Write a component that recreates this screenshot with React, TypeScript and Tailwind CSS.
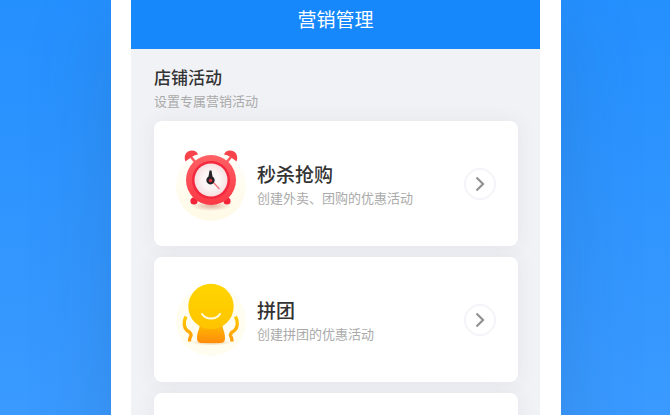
import type { ReactNode } from "react"

const ClockIcon = () => (
    <svg viewBox="0 4 97 100" className="size-full" aria-hidden="true">
        <defs>
            <linearGradient id="clock-halo" x1="0" y1="0" x2="0" y2="1">
                <stop offset="0" stopColor="#fffefa" />
                <stop offset="1" stopColor="#fffae6" />
            </linearGradient>
            <linearGradient id="clock-body" x1="0" y1="0" x2="0" y2="1">
                <stop offset="0" stopColor="#ff6065" />
                <stop offset="1" stopColor="#fb3a46" />
            </linearGradient>
            <radialGradient id="clock-face">
                <stop offset="0.5" stopColor="#fdf6f6" />
                <stop offset="1" stopColor="#f6dfe1" />
            </radialGradient>
            <radialGradient id="clock-shadow">
                <stop offset="0" stopColor="#dba391" stopOpacity="0.8" />
                <stop offset="1" stopColor="#dba391" stopOpacity="0" />
            </radialGradient>
        </defs>
        <circle cx="51" cy="56" r="35" fill="url(#clock-halo)" />
        <ellipse cx="51" cy="76" rx="20" ry="5" fill="url(#clock-shadow)" />
        <path d="M31 27 L37 34 M71 27 L65 34" stroke="#ff5a60" strokeWidth="2.6" />
        <path d="M25.5 31.5 C23 25 27 20.5 32 20.5 C35 20.5 37 22 38 24.5 C33.5 25 30 28 25.5 31.5Z" fill="#f7434c" />
        <path d="M76.5 31.5 C79 25 75 20.5 70 20.5 C67 20.5 65 22 64 24.5 C68.5 25 72 28 76.5 31.5Z" fill="#f7434c" />
        <circle cx="34" cy="71" r="3.6" fill="#f32439" />
        <circle cx="67" cy="71" r="3.6" fill="#f32439" />
        <circle cx="51" cy="50" r="25" fill="url(#clock-body)" />
        <circle cx="51" cy="50" r="19" fill="#f4283e" />
        <circle cx="51" cy="50" r="16.5" fill="url(#clock-face)" />
        <path d="M52 51 L59.5 59" stroke="#f0747d" strokeWidth="1.2" />
        <path d="M49.5 40.5 h2 L52.5 46.5 A4.2 4.2 0 1 1 48.5 46.5Z" fill="#28252a" />
        <circle cx="50.5" cy="50.5" r="1.7" fill="#e62e3c" />
    </svg>
)

const GroupIcon = () => (
    <svg viewBox="0 0 97 100" className="size-full" aria-hidden="true">
        <defs>
            <linearGradient id="group-head" x1="0" y1="0" x2="0" y2="1">
                <stop offset="0" stopColor="#ffd500" />
                <stop offset="1" stopColor="#ffc400" />
            </linearGradient>
            <linearGradient id="group-body" x1="0" y1="0" x2="0" y2="1">
                <stop offset="0" stopColor="#ffbd00" />
                <stop offset="1" stopColor="#ff8c0c" />
            </linearGradient>
            <linearGradient id="group-arm" x1="0" y1="46" x2="0" y2="72" gradientUnits="userSpaceOnUse">
                <stop offset="0" stopColor="#ffcb00" />
                <stop offset="1" stopColor="#ff990a" />
            </linearGradient>
            <radialGradient id="group-shadow">
                <stop offset="0" stopColor="#e2b56f" stopOpacity="0.8" />
                <stop offset="1" stopColor="#e2b56f" stopOpacity="0" />
            </radialGradient>
        </defs>
        <circle cx="51" cy="51" r="35" fill="#fffcf0" />
        <ellipse cx="51" cy="72.5" rx="20" ry="3" fill="url(#group-shadow)" />
        <path d="M39 53 H63 C61.5 59 65 60 65 68 C65 72 63 73 60 73 H42 C39 73 37 72 37 68 C37 60 41 59 39 53Z" fill="url(#group-body)" />
        <circle cx="51" cy="36.5" r="22.7" fill="url(#group-head)" />
        <path d="M42 44 C46 50 56 50 60 44" stroke="#fffbe6" strokeWidth="2" strokeLinecap="round" fill="none" />
        <path
            d="M26 46.5 C23 52 24 58 27 60.5 C29.5 62 31.5 63 31 65.5 C29.5 68 29.5 69 29.5 71.5 M75.5 46.5 C78.5 52 77.5 58 74.5 60.5 C72 62 70 63 70.5 65.5 C72 68 72 69 72 71.5"
            stroke="url(#group-arm)"
            strokeWidth="3.4"
            fill="none"
        />
    </svg>
)

type Activity = {
    title: string
    description: string
    icon: ReactNode
}

const activities: Activity[] = [
    { title: "秒杀抢购", description: "创建外卖、团购的优惠活动", icon: <ClockIcon /> },
    { title: "拼团", description: "创建拼团的优惠活动", icon: <GroupIcon /> },
]

const cardClass = "min-h-[125px] rounded-lg bg-white shadow-[0_0_20px_rgba(70,75,90,0.07)]"

const ActivityCard = ({ title, description, icon }: Activity) => (
    <li className={`${cardClass} flex items-center pl-1.5 pr-[22px]`}>
        <div className="h-[100px] w-[97px] shrink-0">{icon}</div>
        <div className="min-w-0 flex-1">
            <h3 className="text-[19px] leading-7 font-medium text-[#333]">{title}</h3>
            <p className="text-[13px] leading-5 text-[#aaa]">{description}</p>
        </div>
        <button
            type="button"
            aria-label={title}
            className="flex size-8 shrink-0 items-center justify-center rounded-full border-2 border-[#f4f4f8]"
        >
            <svg viewBox="0 0 16 16" className="size-4" fill="none" stroke="#929292" strokeWidth="2.2">
                <path d="M4.5 1.5 L11 8 L4.5 14.5" />
            </svg>
        </button>
    </li>
)

export default function App() {
    return (
        <div className="h-screen overflow-hidden bg-linear-to-b from-[#2490fe] to-[#3a9aff] pl-0.5 font-['Noto_Sans_CJK_SC',sans-serif]">
            <main className="mx-auto min-h-full max-w-[450px] bg-white pl-5 pr-[21px] shadow-[0_20px_80px_rgba(30,70,120,0.2)]">
                <div className="min-h-screen bg-[#f1f2f6]">
                    <header className="bg-[#1688fc] pt-[5px] pb-4">
                        <h1 className="text-center text-[19px] leading-7 text-white">营销管理</h1>
                    </header>
                    <section className="pl-[23px] pr-[22px] pt-4">
                        <h2 className="text-[17px] leading-6 font-medium text-[#333]">店铺活动</h2>
                        <p className="text-[13px] leading-6 text-[#aaa]">设置专属营销活动</p>
                        <ul className="mt-2 flex flex-col gap-[11px]">
                            {activities.map(activity => (
                                <ActivityCard key={activity.title} {...activity} />
                            ))}
                            <li className={cardClass} />
                        </ul>
                    </section>
                </div>
            </main>
        </div>
    )
}
